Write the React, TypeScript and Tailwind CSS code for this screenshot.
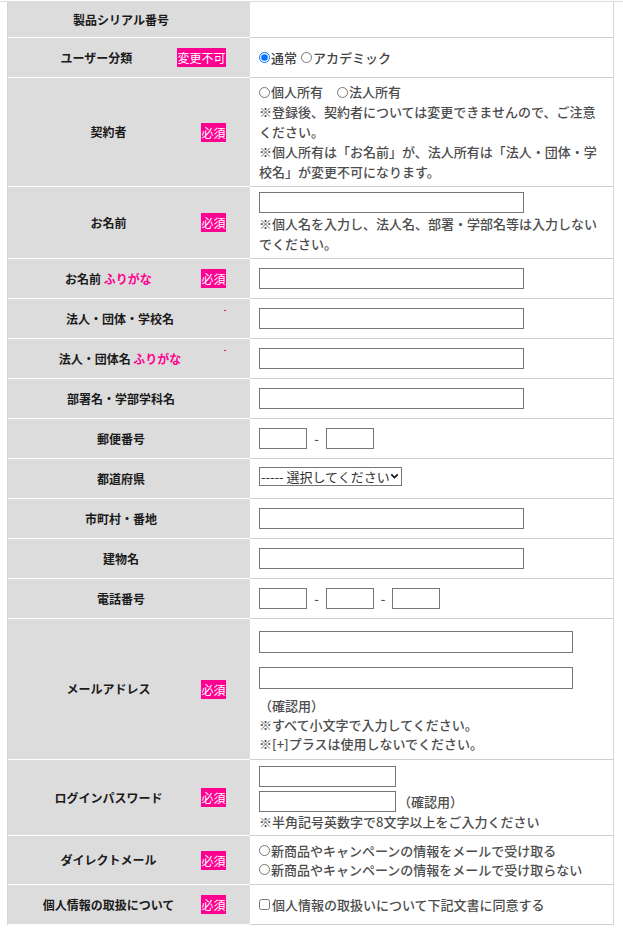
import type { ReactNode } from "react";
import clsx from "clsx";

// 必須 / 変更不可 のバッジ
function Badge({ children }: { children: ReactNode }) {
  return (
    <span className="shrink-0 h-[19px] bg-[#ff0090] px-[0.5px] text-[12px] leading-[19px] text-white">
      {children}
    </span>
  );
}

function Row({
  h,
  label,
  badge,
  valueClass,
  children,
}: {
  h: string;
  label: ReactNode;
  badge?: ReactNode;
  valueClass?: string;
  children?: ReactNode;
}) {
  return (
    <div className={clsx("flex", h)}>
      <div className="flex w-[242px] shrink-0 items-center border-b border-white bg-[#dcdcdc] pl-[8px] pr-[24px]">
        <div className="flex-1 text-center text-[12px] font-bold text-[#1a1a1a]">{label}</div>
        {badge}
      </div>
      <div
        className={clsx(
          "flex flex-1 flex-col border-b border-[#cfcfcf] pl-[9px] pr-[9px] text-[13px] font-medium leading-[20px] text-[#4d4d4d]",
          valueClass ?? "justify-center"
        )}
      >
        {children}
      </div>
    </div>
  );
}

function TextInput({ w = "w-[265px]", h = "h-[21px]" }: { w?: string; h?: string }) {
  return <input type="text" className={clsx("block border border-[#767676] bg-white", w, h)} />;
}

function Radio({ name, checked }: { name: string; checked?: boolean }) {
  return (
    <input
      type="radio"
      name={name}
      defaultChecked={checked}
      className="m-0 mr-[1px] h-[11px] w-[11px] shrink-0"
    />
  );
}

const Hyphen = () => <span className="w-[19px] text-center text-[13px]">-</span>;
const Dot = () => <span className="mb-[16px] h-[1px] w-[2px] shrink-0 bg-[#ff0090]" />;
const Furigana = () => <span className="text-[#ff0090]">ふりがな</span>;

export default function App() {
  return (
    <div className="min-h-[928px] bg-white font-['Noto_Sans_CJK_JP','Noto_Sans',sans-serif]">
      <div className="mt-[1px] border-t border-[#dcdcdc]">
        <div className="ml-[7px] w-[607px] border-l border-r border-[#d6d6d6]">
          <Row h="h-[36px]" label="製品シリアル番号" />

          <Row h="h-[40px]" label="ユーザー分類" badge={<Badge>変更不可</Badge>}>
            <div className="flex items-center">
              <Radio name="usertype" checked />
              <span className="text-[#444]">通常</span>
              <span className="ml-[4px] flex items-center">
                <Radio name="usertype" />
                <span className="text-[#444]">アカデミック</span>
              </span>
            </div>
          </Row>

          <Row h="h-[109px]" label="契約者" badge={<Badge>必須</Badge>}>
            <div className="flex items-center">
              <Radio name="owner" />
              個人所有
              <span className="ml-[14px] flex items-center">
                <Radio name="owner" />
                法人所有
              </span>
            </div>
            <p>※登録後、契約者については変更できませんので、ご注意ください。</p>
            <p>※個人所有は「お名前」が、法人所有は「法人・団体・学校名」が変更不可になります。</p>
          </Row>

          <Row h="h-[72px]" label="お名前" badge={<Badge>必須</Badge>}>
            <TextInput />
            <p className="mt-[1px]">※個人名を入力し、法人名、部署・学部名等は入力しないでください。</p>
          </Row>

          <Row h="h-[40px]" label={<>お名前 <Furigana /></>} badge={<Badge>必須</Badge>}>
            <TextInput />
          </Row>

          <Row h="h-[40px]" label="法人・団体・学校名" badge={<Dot />}>
            <TextInput />
          </Row>

          <Row h="h-[40px]" label={<>法人・団体名 <Furigana /></>} badge={<Dot />}>
            <TextInput />
          </Row>

          <Row h="h-[40px]" label="部署名・学部学科名">
            <TextInput />
          </Row>

          <Row h="h-[40px]" label="郵便番号">
            <div className="flex items-center">
              <TextInput w="w-[48px]" />
              <Hyphen />
              <TextInput w="w-[48px]" />
            </div>
          </Row>

          <Row h="h-[40px]" label="都道府県" valueClass="justify-start pt-[8px]">
            <div className="relative w-[143px]">
              <select className="block h-[19px] w-[143px] appearance-none border border-[#767676] bg-white pl-[1px] text-[13px] font-normal leading-[17px] text-[#333]">
                <option>----- 選択してください</option>
              </select>
              <svg
                viewBox="0 0 10 10"
                className="pointer-events-none absolute right-[3px] top-[5px] h-[8px] w-[9px] bg-white"
              >
                <path d="M1 3 L5 7 L9 3" fill="none" stroke="#111" strokeWidth="2" />
              </svg>
            </div>
          </Row>

          <Row h="h-[40px]" label="市町村・番地">
            <TextInput />
          </Row>

          <Row h="h-[40px]" label="建物名">
            <TextInput />
          </Row>

          <Row h="h-[40px]" label="電話番号">
            <div className="flex items-center">
              <TextInput w="w-[48px]" />
              <Hyphen />
              <TextInput w="w-[48px]" />
              <span className="w-[18px] text-center">-</span>
              <TextInput w="w-[48px]" />
            </div>
          </Row>

          <Row h="h-[141px]" label="メールアドレス" badge={<Badge>必須</Badge>} valueClass="justify-start pt-[12px]">
            <TextInput w="w-[314px]" h="h-[22px]" />
            <div className="mt-[14px]">
              <TextInput w="w-[314px]" h="h-[22px]" />
            </div>
            <div className="mt-[7px] leading-[19px]">
              <p>（確認用）</p>
              <p>※すべて小文字で入力してください。</p>
              <p>※[+]プラスは使用しないでください。</p>
            </div>
          </Row>

          <Row h="h-[76px]" label="ログインパスワード" badge={<Badge>必須</Badge>} valueClass="justify-start pt-[6px]">
            <TextInput w="w-[137px]" />
            <div className="mt-[4px] flex items-center">
              <TextInput w="w-[137px]" />
              <span className="ml-[2px]">（確認用）</span>
            </div>
            <p>※半角記号英数字で8文字以上をご入力ください</p>
          </Row>

          <Row h="h-[49px]" label="ダイレクトメール" badge={<Badge>必須</Badge>}>
            <div className="flex items-center leading-[19px]">
              <Radio name="dm" />
              新商品やキャンペーンの情報をメールで受け取る
            </div>
            <div className="flex items-center leading-[19px]">
              <Radio name="dm" />
              新商品やキャンペーンの情報をメールで受け取らない
            </div>
          </Row>

          <Row h="h-[40px]" label="個人情報の取扱について" badge={<Badge>必須</Badge>}>
            <div className="flex items-center">
              <input type="checkbox" className="m-0 mr-[2px] h-[11px] w-[11px]" />
              個人情報の取扱いについて下記文書に同意する
            </div>
          </Row>
        </div>
      </div>
    </div>
  );
}
